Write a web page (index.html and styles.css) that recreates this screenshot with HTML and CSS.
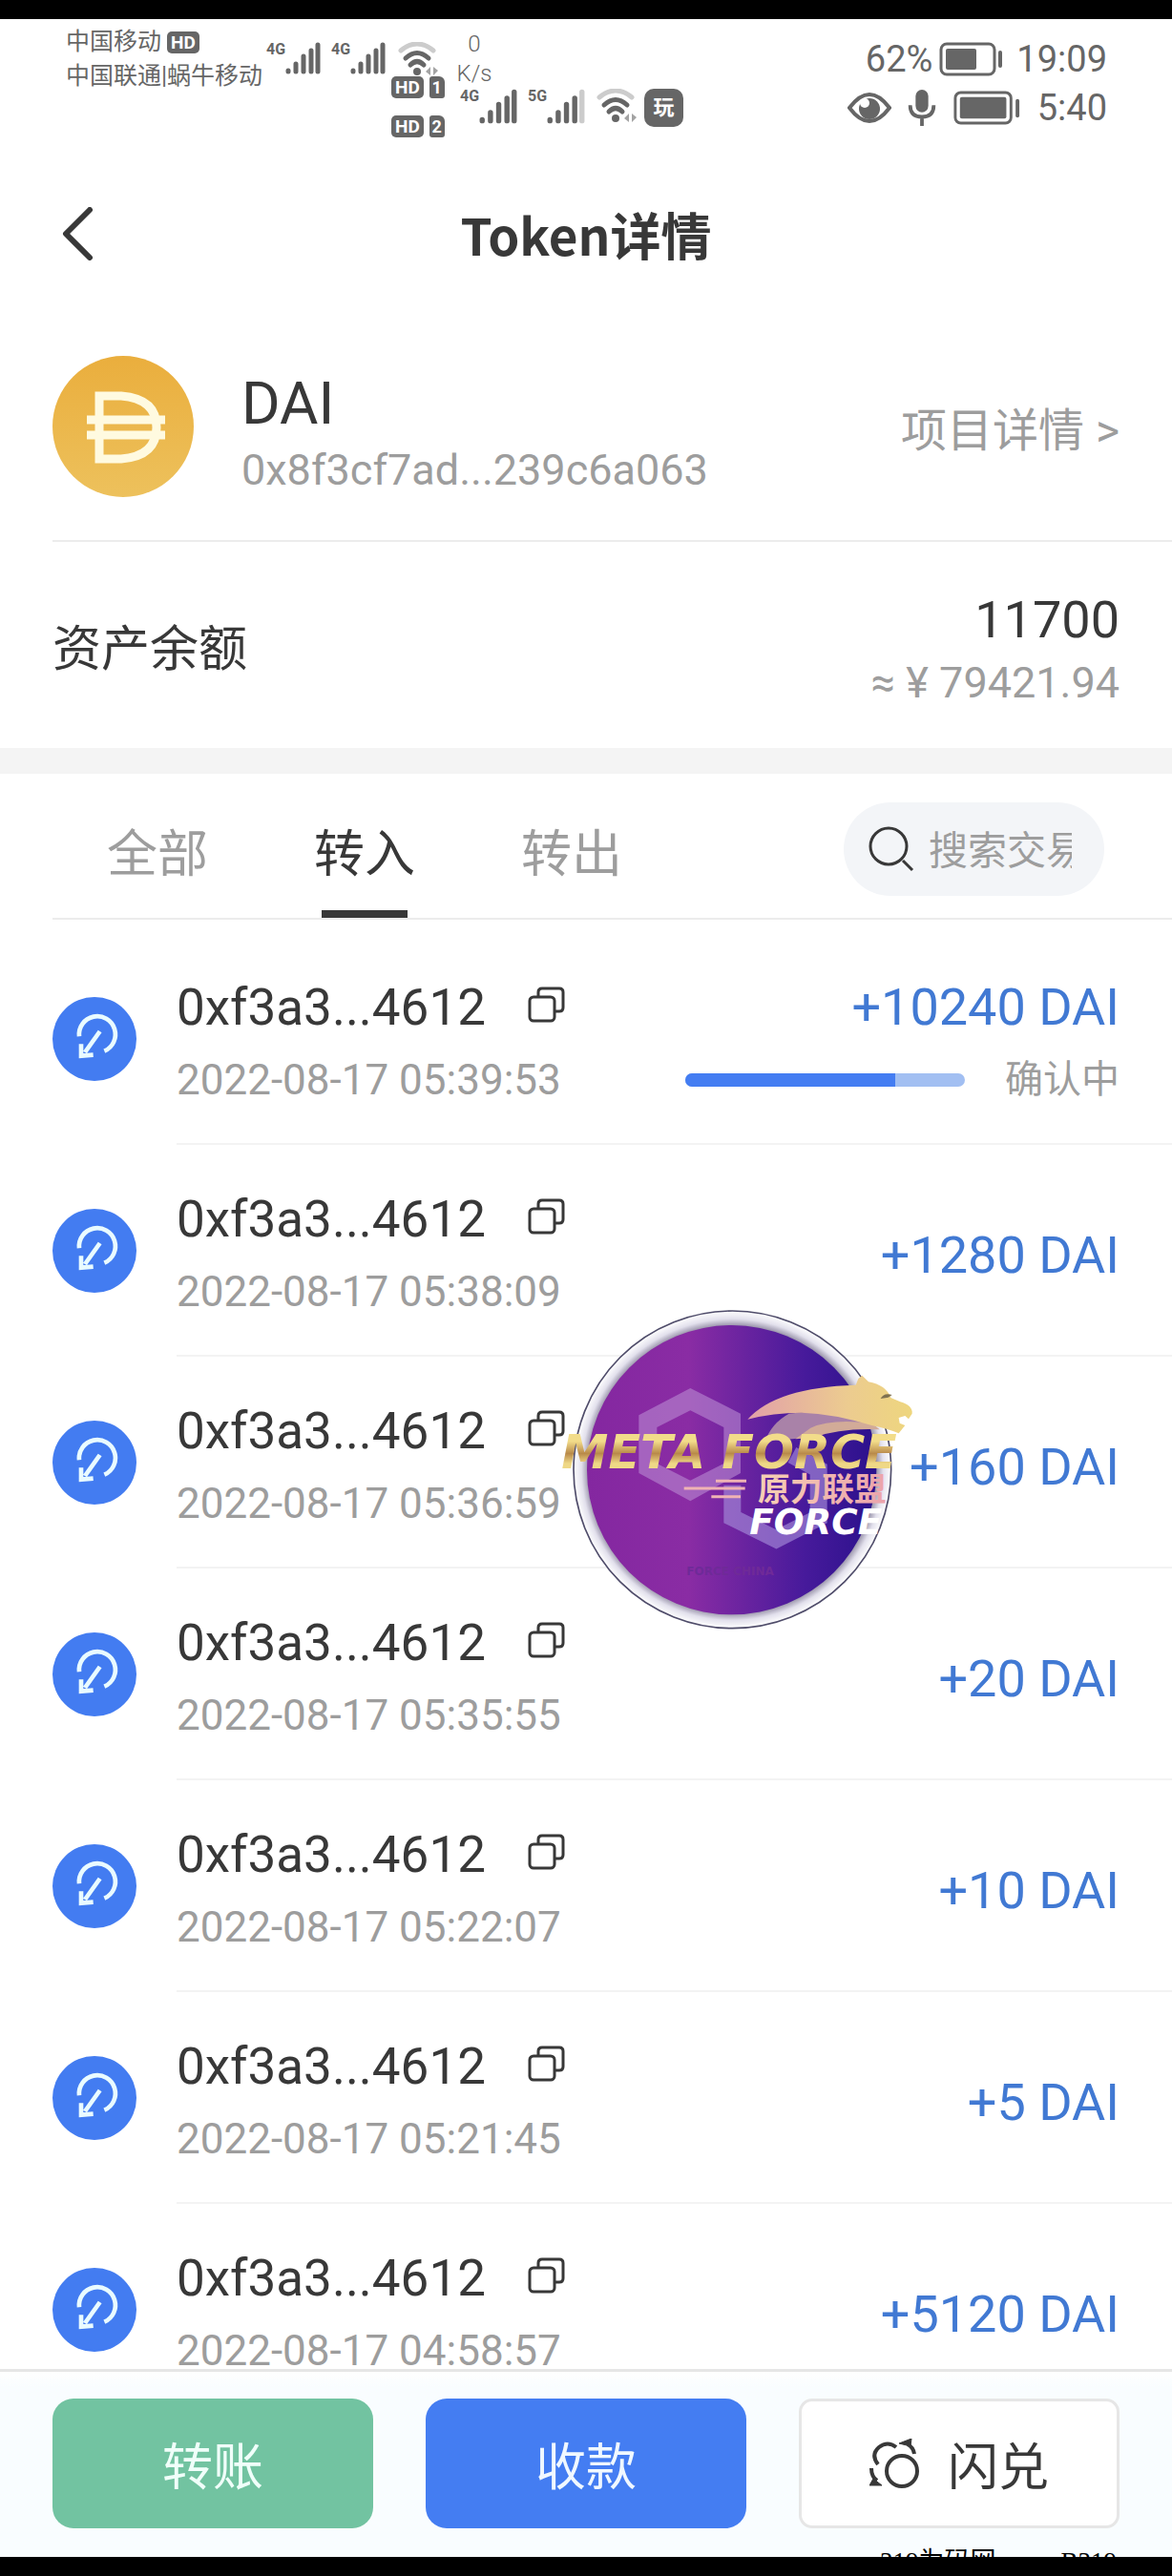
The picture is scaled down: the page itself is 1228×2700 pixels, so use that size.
FILE: index.html
```html
<!DOCTYPE html>
<html lang="zh-CN">
<head>
    <meta charset="UTF-8">
    <meta name="viewport" content="width=device-width, initial-scale=1.0">
    <title>Token详情</title>
    <link rel="stylesheet" href="styles.css">
</head>
<body>

    <!-- shared icons -->
    <svg class="sprite" aria-hidden="true">
        <symbol id="icon-signal" viewBox="0 0 37 34">
            <g stroke="currentColor" stroke-width="5" stroke-linecap="round">
                <path d="M3 30v1M11 23v8M19 15v16M27 9v22M34 3v28"/>
            </g>
        </symbol>
        <symbol id="icon-signal-weak" viewBox="0 0 37 34">
            <g stroke="currentColor" stroke-width="5" stroke-linecap="round">
                <path d="M3 30v1M11 23v8M19 15v16M27 9v22"/>
                <path d="M34 3v28" stroke="#ccc"/>
            </g>
        </symbol>
        <symbol id="icon-wifi" viewBox="0 0 42 36">
            <g fill="none" stroke="currentColor" stroke-width="5" stroke-linecap="round">
                <path d="M3 9Q20 -5 37 9" stroke="#ccc"/>
                <path d="M8 17Q20 6 32 17M13 24Q20 17 27 24"/>
            </g>
            <circle cx="20" cy="31" r="4" fill="currentColor"/>
            <path d="M34 26v9l-5-4zM37 26v9l5-5z" fill="currentColor" opacity=".6"/>
        </symbol>
        <symbol id="icon-copy" viewBox="0 0 39 38">
            <g fill="none" stroke="currentColor" stroke-width="3">
                <rect x="2" y="11" width="26" height="25" rx="4"/>
                <path d="M11 10V6q0-4 4-4h18q4 0 4 4v16q0 4-4 4h-4"/>
            </g>
        </symbol>
        <symbol id="icon-receive" viewBox="0 0 264 264">
            <circle cx="132" cy="132" r="132" fill="#437cf1"/>
            <g fill="none" stroke="#e9fbff" stroke-width="14">
                <path d="M84 124A57 57 0 1 1 163 170"/>
                <path d="M149 108 102 174M90 148v37l38-3"/>
            </g>
        </symbol>
    </svg>

    <div class="app">
        <div class="edge"></div>

        <div class="status">
            <div class="carriers">
                <div class="carrier">中国移动 <span class="hd">HD</span></div>
                <div class="carrier">中国联通|蜗牛移动</div>
            </div>
            <div class="signals signals-top">
                <span class="net">4G</span><svg class="bars"><use href="#icon-signal"/></svg>
                <span class="net net-next">4G</span><svg class="bars"><use href="#icon-signal"/></svg>
            </div>
            <div class="wifi-col">
                <svg class="wifi"><use href="#icon-wifi"/></svg>
                <div class="sim"><span class="hd">HD</span><span class="sim-no">1</span></div>
                <div class="sim"><span class="hd">HD</span><span class="sim-no">2</span></div>
            </div>
            <div class="speed-col">
                <div class="speed">0<br>K/s</div>
                <div class="signals signals-bottom">
                    <span class="net">4G</span><svg class="bars"><use href="#icon-signal"/></svg>
                    <span class="net net-next">5G</span><svg class="bars"><use href="#icon-signal-weak"/></svg>
                    <svg class="wifi wifi-next"><use href="#icon-wifi"/></svg>
                    <span class="play">玩</span>
                </div>
            </div>
            <div class="status-right">
                <div class="status-row">
                    <span>62%</span>
                    <svg class="battery" viewBox="0 0 68 36">
                        <rect x="2" y="2" width="56" height="32" rx="6" fill="none" stroke="currentColor" stroke-width="3"/>
                        <rect x="7" y="7" width="32" height="22" rx="2" fill="currentColor"/>
                        <rect x="62" y="9" width="4" height="18" rx="2" fill="currentColor"/>
                    </svg>
                    <span>19:09</span>
                </div>
                <div class="status-row status-row-wide">
                    <svg class="eye" viewBox="0 0 46 32">
                        <path d="M2 16Q23-12 44 16Q23 44 2 16Z" fill="none" stroke="currentColor" stroke-width="4"/>
                        <circle cx="23" cy="17" r="11" fill="currentColor"/>
                        <circle cx="18" cy="11" r="5" fill="#fff"/>
                    </svg>
                    <svg class="mic" viewBox="0 0 30 40">
                        <rect x="8" y="0" width="14" height="25" rx="7" fill="currentColor"/>
                        <path d="M2 17q0 13 13 13t13-13M15 30v10" fill="none" stroke="currentColor" stroke-width="4"/>
                    </svg>
                    <svg class="battery battery-full" viewBox="0 0 72 37">
                        <rect x="2" y="2" width="60" height="33" rx="6" fill="none" stroke="currentColor" stroke-width="3"/>
                        <rect x="7" y="7" width="50" height="23" rx="2" fill="currentColor"/>
                        <rect x="67" y="9" width="4" height="20" rx="2" fill="currentColor"/>
                    </svg>
                    <span>5:40</span>
                </div>
            </div>
        </div>

        <header class="header">
            <button class="back-btn" type="button" aria-label="返回">
                <svg viewBox="0 0 34 56"><path d="M30 3 5 28l25 25" fill="none" stroke="currentColor" stroke-width="6" stroke-linecap="round" stroke-linejoin="round"/></svg>
            </button>
            <h1>Token详情</h1>
        </header>

        <section class="token">
            <svg class="token-icon" viewBox="0 0 148 148">
                <defs>
                    <linearGradient id="gold" x1="0" y1="0" x2="0" y2="1">
                        <stop offset="0" stop-color="#eaae3d"/>
                        <stop offset="1" stop-color="#edc15c"/>
                    </linearGradient>
                </defs>
                <circle cx="74" cy="74" r="74" fill="url(#gold)"/>
                <g fill="none" stroke="#fffae0" stroke-width="9">
                    <path d="M49 42h23q37 3 37 33t-37 33H49Z"/>
                    <path d="M36 67h82M36 83h82"/>
                </g>
            </svg>
            <div class="token-info">
                <div class="token-name">DAI</div>
                <div class="token-address">0x8f3cf7ad...239c6a063</div>
            </div>
            <a class="token-link" href="#">项目详情 &gt;</a>
        </section>

        <section class="balance">
            <div class="balance-label">资产余额</div>
            <div class="balance-value">
                <div class="balance-amount">11700</div>
                <div class="balance-fiat">≈ ¥ 79421.94</div>
            </div>
        </section>

        <div class="toolbar">
            <button class="tab" type="button">全部</button>
            <button class="tab active" type="button">转入</button>
            <button class="tab" type="button">转出</button>
            <label class="search">
                <svg viewBox="0 0 48 48"><path d="M36 36 46 46" stroke="currentColor" stroke-width="3"/><circle cx="21" cy="21" r="19" fill="none" stroke="currentColor" stroke-width="3"/></svg>
                <input type="text" placeholder="搜索交易" aria-label="搜索交易">
            </label>
        </div>

        <main class="content">
            <ul class="tx-list">
                <li class="tx">
                    <svg class="tx-icon"><use href="#icon-receive"/></svg>
                    <div class="tx-body">
                        <div class="tx-info">
                            <div class="tx-hash">0xf3a3...4612 <button class="copy-btn" type="button" aria-label="复制"><svg><use href="#icon-copy"/></svg></button></div>
                            <div class="tx-date">2022-08-17 05:39:53</div>
                        </div>
                        <div class="tx-side">
                            <div class="tx-amount">+10240 DAI</div>
                            <div class="tx-pending"><div class="progress"><div class="progress-fill" style="width: 75%"></div></div>确认中</div>
                        </div>
                    </div>
                </li>
                <li class="tx">
                    <svg class="tx-icon"><use href="#icon-receive"/></svg>
                    <div class="tx-body">
                        <div class="tx-info">
                            <div class="tx-hash">0xf3a3...4612 <button class="copy-btn" type="button" aria-label="复制"><svg><use href="#icon-copy"/></svg></button></div>
                            <div class="tx-date">2022-08-17 05:38:09</div>
                        </div>
                        <div class="tx-side">
                            <div class="tx-amount">+1280 DAI</div>
                        </div>
                    </div>
                </li>
                <li class="tx">
                    <svg class="tx-icon"><use href="#icon-receive"/></svg>
                    <div class="tx-body">
                        <div class="tx-info">
                            <div class="tx-hash">0xf3a3...4612 <button class="copy-btn" type="button" aria-label="复制"><svg><use href="#icon-copy"/></svg></button></div>
                            <div class="tx-date">2022-08-17 05:36:59</div>
                        </div>
                        <div class="tx-side">
                            <div class="tx-amount">+160 DAI</div>
                        </div>
                    </div>
                </li>
                <li class="tx">
                    <svg class="tx-icon"><use href="#icon-receive"/></svg>
                    <div class="tx-body">
                        <div class="tx-info">
                            <div class="tx-hash">0xf3a3...4612 <button class="copy-btn" type="button" aria-label="复制"><svg><use href="#icon-copy"/></svg></button></div>
                            <div class="tx-date">2022-08-17 05:35:55</div>
                        </div>
                        <div class="tx-side">
                            <div class="tx-amount">+20 DAI</div>
                        </div>
                    </div>
                </li>
                <li class="tx">
                    <svg class="tx-icon"><use href="#icon-receive"/></svg>
                    <div class="tx-body">
                        <div class="tx-info">
                            <div class="tx-hash">0xf3a3...4612 <button class="copy-btn" type="button" aria-label="复制"><svg><use href="#icon-copy"/></svg></button></div>
                            <div class="tx-date">2022-08-17 05:22:07</div>
                        </div>
                        <div class="tx-side">
                            <div class="tx-amount">+10 DAI</div>
                        </div>
                    </div>
                </li>
                <li class="tx">
                    <svg class="tx-icon"><use href="#icon-receive"/></svg>
                    <div class="tx-body">
                        <div class="tx-info">
                            <div class="tx-hash">0xf3a3...4612 <button class="copy-btn" type="button" aria-label="复制"><svg><use href="#icon-copy"/></svg></button></div>
                            <div class="tx-date">2022-08-17 05:21:45</div>
                        </div>
                        <div class="tx-side">
                            <div class="tx-amount">+5 DAI</div>
                        </div>
                    </div>
                </li>
                <li class="tx">
                    <svg class="tx-icon"><use href="#icon-receive"/></svg>
                    <div class="tx-body">
                        <div class="tx-info">
                            <div class="tx-hash">0xf3a3...4612 <button class="copy-btn" type="button" aria-label="复制"><svg><use href="#icon-copy"/></svg></button></div>
                            <div class="tx-date">2022-08-17 04:58:57</div>
                        </div>
                        <div class="tx-side">
                            <div class="tx-amount">+5120 DAI</div>
                        </div>
                    </div>
                </li>
            </ul>

            <!-- floating Meta Force badge -->
            <svg class="badge" viewBox="0 0 1320 1170">
                <defs>
                    <linearGradient id="disc" x1="0" x2="1" y1="0" y2="0">
                        <stop offset="0" stop-color="#8427a0"/>
                        <stop offset=".35" stop-color="#8a2ca4"/>
                        <stop offset=".75" stop-color="#471a9b"/>
                        <stop offset="1" stop-color="#2b118c"/>
                    </linearGradient>
                    <radialGradient id="rim">
                        <stop offset=".9" stop-color="#8d879f"/>
                        <stop offset=".95" stop-color="#e2e0ec"/>
                        <stop offset="1" stop-color="#ffffff"/>
                    </radialGradient>
                    <linearGradient id="letters" x1="0" x2="0" y1="0" y2="1">
                        <stop offset=".3" stop-color="#f2dc8a"/>
                        <stop offset=".52" stop-color="#b98a4a"/>
                        <stop offset=".7" stop-color="#efd886"/>
                    </linearGradient>
                    <linearGradient id="lion" x1="0" x2="1" y1="0" y2="0">
                        <stop offset="0" stop-color="#e2a0a8"/>
                        <stop offset=".6" stop-color="#eccb90"/>
                        <stop offset="1" stop-color="#eed67e"/>
                    </linearGradient>
                    <linearGradient id="rose" x1="0" x2="1" y1="0" y2="0">
                        <stop offset="0" stop-color="#f6d0b4"/>
                        <stop offset="1" stop-color="#eba3ac"/>
                    </linearGradient>
                </defs>
                <circle cx="622" cy="601" r="499" fill="url(#rim)" stroke="#4f4c6a" stroke-width="5"/>
                <circle cx="620" cy="602" r="455" fill="url(#disc)"/>
                <path d="M490 345 648 425V612L490 700 328 612V430ZM490 415 385 468V582L490 635 595 582V468Z" fill="#b98ad2" fill-opacity=".6" fill-rule="evenodd"/>
                <path d="M622 650V752L760 820 893 752V600L810 555" fill="none" stroke="#a48ad8" stroke-opacity=".65" stroke-width="54"/>
                <path d="M725 512Q745 455 800 425Q940 405 1075 468Q950 465 860 500Z" fill="#a982a8"/>
                <path d="M868 470Q930 440 1060 455L1085 475Q960 470 880 500L820 505Z" fill="#d2ab98"/>
                <path d="M670 443Q760 342 1010 335L1018 315 1030 305 1050 325Q1105 335 1120 375L1150 388Q1190 400 1187 425L1176 442 1165 432 1145 438 1148 455 1165 462 1145 487Q1110 472 1060 462Q940 425 840 422Q750 422 670 443Z" fill="url(#lion)"/>
                <path d="M1088 378Q1098 358 1124 366L1112 374Z" fill="#7f7150"/>
                <text class="badge-title" x="85" y="598" fill="url(#letters)">META FORCE</text>
                <path d="M570 637h96M470 660h192M556 686h92" stroke="#efb3b4" stroke-width="9"/>
                <text class="badge-cn" x="702" y="700" fill="url(#rose)">原力联盟</text>
                <text class="badge-sub" x="676" y="804" fill="#ffffff">FORCE</text>
                <text class="badge-note" x="478" y="932">FORCE CHINA</text>
            </svg>
        </main>

        <footer class="actions">
            <button class="action transfer" type="button">转账</button>
            <button class="action receive" type="button">收款</button>
            <button class="action swap" type="button">
                <svg viewBox="0 0 52 52" fill="none" stroke="currentColor" stroke-width="4">
                    <circle cx="34" cy="34" r="16"/>
                    <path d="M28 9Q19 2 10 9Q1 17 9 27M40 6Q46 9 47 16M2 31Q2 40 8 44"/>
                    <path d="M31 5 44 0 43 8ZM0 49l4-7 9 7z" fill="currentColor" stroke-width="1"/>
                </svg>
                闪兑
            </button>
            <div class="watermark"><span>319为码网</span><span>B319</span></div>
        </footer>
        <div class="edge"></div>
    </div>

</body>
</html>
```

FILE: styles.css
```css
:root {
    --text-color: #383838;
    --muted-color: #9d9d9d;
    --status-color: #666;
    --line-color: #ececec;
    --blue: #447df2;
    --amount-color: #4179d3;
    --green: #72c3a1;
    --side: 55px;
}

* { margin: 0; padding: 0; box-sizing: border-box; }

body {
    font-family: Roboto, 'Noto Sans CJK SC', sans-serif;
    color: var(--text-color);
    background-color: #fff;
}

button {
    font: inherit;
    color: inherit;
    background: none;
    border: none;
    cursor: pointer;
}

svg { display: block; flex-shrink: 0; }
.sprite { position: absolute; width: 0; height: 0; }

.app {
    display: flex;
    flex-direction: column;
    height: 100vh;
    overflow: hidden;
}
.app > * { flex-shrink: 0; }
.edge { height: 20px; background-color: #000; }

/* --- STATUS BAR --- */
.status {
    display: flex;
    align-items: flex-start;
    height: 140px;
    padding: 6px 68px 0 69px;
    color: var(--status-color);
    white-space: nowrap;
}
.carriers { width: 210px; }
.carrier {
    display: flex;
    align-items: center;
    gap: 6px;
    font-size: 25px;
    line-height: 36px;
}
.hd {
    padding: 0 4px;
    font-size: 19px;
    line-height: 23px;
    font-weight: 700;
    color: #fff;
    background-color: var(--status-color);
    border-radius: 5px;
}
.signals { display: flex; align-items: flex-start; }
.signals-top { padding-top: 18px; }
.net { width: 20px; font-size: 16px; line-height: 16px; font-weight: 700; }
.net-next { margin-left: 11px; }
.bars { width: 37px; height: 34px; }
.wifi { width: 42px; height: 36px; }
.wifi-col { padding: 18px 0 0 7px; margin-left: 6px; width: 68px; }
.sim { display: flex; gap: 6px; margin: 0 0 18px -7px; }
.sim-no {
    width: 16px;
    font-size: 18px;
    line-height: 23px;
    font-weight: 700;
    text-align: center;
    color: #fff;
    background-color: var(--status-color);
    border-radius: 3px 6px 3px 3px;
}
.speed-col { padding-top: 5px; }
.speed {
    width: 38px;
    font-size: 24px;
    line-height: 31px;
    font-weight: 300;
    text-align: center;
}
.signals-bottom { padding-left: 4px; }
.signals-bottom .bars { width: 40px; height: 37px; }
.wifi-next { margin-left: 12px; }
.play {
    width: 41px;
    margin-left: 8px;
    font-size: 22px;
    line-height: 40px;
    font-weight: 700;
    text-align: center;
    color: #fff;
    background-color: var(--status-color);
    border-radius: 10px;
}
.status-right {
    display: flex;
    flex-direction: column;
    align-items: flex-end;
    gap: 14px;
    padding-top: 18px;
    margin-left: auto;
    font-size: 38px;
    line-height: 36px;
}
.status-row { display: flex; align-items: center; gap: 13px; }
.status-row-wide { gap: 17px; }
.battery { width: 68px; height: 36px; margin-left: -6px; }
.battery-full { width: 72px; margin-left: 0; }
.eye { width: 46px; height: 32px; }
.mic { width: 30px; height: 38px; }

/* --- HEADER --- */
.header {
    display: grid;
    grid-template-columns: 1fr auto 1fr;
    align-items: center;
    height: 170px;
    padding: 0 64px;
}
.header h1 {
    font-family: 'Noto Sans CJK SC', sans-serif;
    font-size: 53px;
    font-weight: 700;
}
.back-btn { justify-self: start; }
.back-btn svg { width: 34px; height: 56px; }

/* --- TOKEN --- */
.token {
    display: flex;
    align-items: center;
    margin-left: var(--side);
    padding: 36px 55px 38px 0;
    border-bottom: 2px solid var(--line-color);
}
.token-icon { width: 148px; height: 148px; }
.token-info { margin-left: 50px; padding-top: 22px; }
.token-name { font-size: 62px; line-height: 70px; }
.token-address { font-size: 45px; line-height: 70px; color: var(--muted-color); }
.token-link {
    margin-left: auto;
    font-size: 48px;
    color: var(--muted-color);
    text-decoration: none;
}

.balance {
    display: flex;
    align-items: center;
    justify-content: space-between;
    height: 216px;
    padding: 0 55px;
}
.balance-label { font-size: 51px; }
.balance-value { padding-top: 14px; text-align: right; line-height: 66px; }
.balance-amount { font-size: 54px; }
.balance-fiat { font-size: 45px; color: var(--muted-color); }

/* --- TABS + SEARCH --- */
.toolbar {
    display: flex;
    align-items: stretch;
    gap: 111px;
    height: 180px;
    padding: 0 71px 0 112px;
    border-top: 27px solid #f4f4f4;
    background: linear-gradient(var(--line-color), var(--line-color)) right bottom / calc(100% - 55px) 2px no-repeat;
}
.tab {
    position: relative;
    padding-top: 6px;
    font-size: 53px;
    color: var(--muted-color);
}
.tab.active { color: var(--text-color); }
.tab.active::after {
    content: '';
    position: absolute;
    left: 8px;
    right: 8px;
    bottom: 2px;
    height: 8px;
    background-color: var(--text-color);
}
.search {
    display: flex;
    align-items: center;
    align-self: center;
    gap: 15px;
    width: 273px;
    height: 98px;
    margin: 4px 0 0 auto;
    padding: 0 34px 0 26px;
    background-color: #f3f5f8;
    border-radius: 49px;
}
.search svg { width: 48px; height: 48px; }
.search input {
    flex: 1;
    min-width: 0;
    padding-top: 4px;
    font: inherit;
    font-size: 41px;
    background: none;
    border: none;
    outline: none;
}
.search input::placeholder { color: var(--muted-color); opacity: 1; }

/* --- TRANSACTIONS --- */
.app > .content {
    position: relative;
    flex: 1;
    min-height: 0;
    overflow: hidden;
}
.tx-list { list-style: none; padding-top: 14px; }
.tx {
    display: flex;
    align-items: center;
    gap: 42px;
    padding-left: var(--side);
}
.tx-icon { width: 88px; height: 88px; }
.tx-body {
    display: flex;
    align-items: center;
    justify-content: space-between;
    flex: 1;
    height: 222px;
    padding-right: 55px;
    border-bottom: 2px solid #f3f3f3;
}
.tx-info, .tx-side { padding-top: 12px; }
.tx-hash {
    display: flex;
    align-items: center;
    gap: 44px;
    font-size: 53px;
    line-height: 76px;
}
.copy-btn svg { width: 39px; height: 38px; margin-bottom: 6px; }
.tx-date { font-size: 44px; line-height: 76px; color: var(--muted-color); }
.tx-amount { font-size: 54px; line-height: 76px; color: var(--amount-color); text-align: right; }
.tx-pending {
    display: flex;
    align-items: center;
    gap: 42px;
    font-size: 40px;
    line-height: 76px;
    color: var(--muted-color);
}
.progress {
    width: 293px;
    height: 14px;
    background-color: #a2bff2;
    border-radius: 7px;
    overflow: hidden;
}
.progress-fill { height: 100%; background-color: var(--blue); }

/* --- FLOATING BADGE --- */
.badge {
    position: absolute;
    top: 376px;
    right: 228px;
    width: 440px;
    height: 390px;
    pointer-events: none;
}
.badge text { font-family: 'DejaVu Sans', sans-serif; font-weight: 700; }
.badge .badge-title { font-size: 148px; font-style: italic; }
.badge .badge-cn { font-family: 'Noto Sans CJK SC', sans-serif; font-size: 101px; }
.badge .badge-sub { font-size: 112px; font-style: italic; }
.badge .badge-note { font-size: 36px; fill: #6f2a98; }

/* --- BOTTOM ACTIONS --- */
.actions {
    position: relative;
    display: grid;
    grid-template-columns: repeat(3, minmax(0, 1fr));
    gap: 55px;
    padding: 28px 55px 30px;
    background: linear-gradient(#fff, #f9fdff 16px);
    border-top: 3px solid #e6e6e6;
}
.action {
    display: flex;
    align-items: center;
    justify-content: center;
    gap: 30px;
    height: 136px;
    font-size: 53px;
    border-radius: 22px;
}
.transfer { color: #f0fffa; background-color: var(--green); }
.receive { color: #f0f8ff; background-color: var(--blue); }
.swap { background-color: #fff; border: 3px solid #e6e6e6; border-radius: 14px; }
.swap svg { width: 52px; height: 52px; }
.watermark {
    position: absolute;
    right: 58px;
    bottom: -20px;
    display: flex;
    gap: 68px;
    font-family: 'Liberation Serif', 'Noto Sans CJK SC', serif;
    font-size: 27px;
    line-height: 30px;
    color: #000;
}
```
